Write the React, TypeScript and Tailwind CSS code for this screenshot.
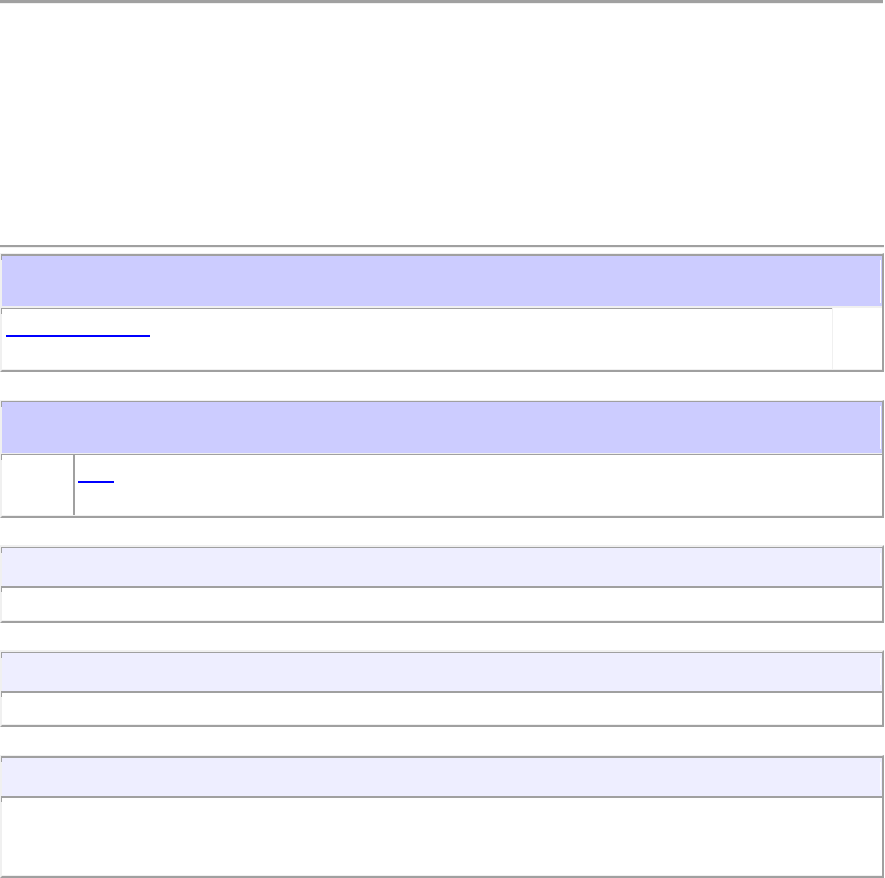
import React from "react";

function Tick({ cls }: { cls: string }) {
  return <span className={cls} />;
}

export default function App() {
  return (
    <div className="w-[885px] h-[878px] overflow-hidden bg-white font-['Liberation_Sans',sans-serif]">
      <div className="flex w-[884px] flex-col">
        {/* top rule */}
        <div className="h-[3px] w-[883px] bg-[#a0a0a0]" />
        <div className="h-px w-[883px] bg-[#f0f0f0]" />

        {/* second rule */}
        <div className="mt-[241px] h-[2px] bg-[#a0a0a0]" />
        <div className="h-px bg-[#f0f0f0]" />

        {/* table 1 */}
        <div className="mt-[5px] flex flex-col border-t border-l-2 border-r-2 border-b-2 border-t-[#f0f0f0] border-l-[#f0f0f0] border-r-[#a0a0a0] border-b-[#a0a0a0]">
          <div className="relative flex h-[54px] justify-end border-t-2 border-b-2 border-t-[#a0a0a0] border-b-[#f0f0f0] bg-[#ccccff] pt-[4px] pb-[3px] pr-px">
            <Tick cls="absolute left-[-1px] top-[-2px] h-[6px] w-px bg-[#a0a0a0]" />
            <div className="w-px bg-white" />
          </div>
          <div className="flex h-[62px]">
            <div className="relative flex-1 border-t border-b border-t-[#a0a0a0] border-b-[#f0f0f0] bg-white pl-[4px] pt-[26px]">
              <Tick cls="absolute left-[-1px] top-[-1px] h-[6px] w-px bg-[#a0a0a0]" />
              <a href="#" className="block h-0 w-[144px] border-b-2 border-[#0000ff]"></a>
            </div>
            <div className="w-[50px] border-l border-b border-l-[#f0f0f0] border-b-[#f0f0f0] bg-white" />
          </div>
        </div>

        {/* table 2 */}
        <div className="mt-[28px] flex flex-col border-t border-l-2 border-r-2 border-b-2 border-t-[#f0f0f0] border-l-[#f0f0f0] border-r-[#a0a0a0] border-b-[#a0a0a0]">
          <div className="relative flex h-[53px] justify-end border-t border-b border-t-[#a0a0a0] border-b-[#f0f0f0] bg-[#ccccff] pt-[4px] pb-[4px] pr-px">
            <Tick cls="absolute left-[-1px] top-[-1px] h-[6px] w-px bg-[#a0a0a0]" />
            <div className="w-px bg-white" />
          </div>
          <div className="flex h-[62px] border-t border-b border-t-[#a0a0a0] border-b-[#f0f0f0]">
            <div className="relative w-[71px] bg-white">
              <Tick cls="absolute left-[-1px] top-[-1px] h-[6px] w-px bg-[#a0a0a0]" />
            </div>
            <div className="flex-1 border-l-2 border-l-[#a0a0a0] bg-white pl-[3px] pt-[26px]">
              <a href="#" className="block h-0 w-[36px] border-b-2 border-[#0000ff]"></a>
            </div>
          </div>
        </div>

        {/* table 3 */}
        <div className="mt-[27px] flex flex-col border-t-2 border-l-2 border-r-2 border-b-2 border-t-[#f0f0f0] border-l-[#f0f0f0] border-r-[#a0a0a0] border-b-[#a0a0a0]">
          <div className="relative flex h-[39px] justify-end border-t border-t-[#a0a0a0] bg-[#eeeeff] pt-[5px] pb-[6px] pr-px">
            <Tick cls="absolute left-[-1px] top-[-1px] h-[6px] w-px bg-[#a0a0a0]" />
            <div className="w-px bg-white" />
          </div>
          <div className="relative h-[35px] border-t-2 border-b border-t-[#a0a0a0] border-b-[#f0f0f0] bg-white">
            <Tick cls="absolute left-[-1px] top-[-2px] h-[6px] w-px bg-[#a0a0a0]" />
          </div>
        </div>

        {/* table 4 */}
        <div className="mt-[27px] flex flex-col border-t-2 border-l-2 border-r-2 border-b-2 border-t-[#f0f0f0] border-l-[#f0f0f0] border-r-[#a0a0a0] border-b-[#a0a0a0]">
          <div className="relative flex h-[39px] justify-end border-t border-t-[#a0a0a0] bg-[#eeeeff] pt-[5px] pb-[6px] pr-px">
            <Tick cls="absolute left-[-1px] top-[-1px] h-[6px] w-px bg-[#a0a0a0]" />
            <div className="w-px bg-white" />
          </div>
          <div className="relative h-[34px] border-t-2 border-b border-t-[#a0a0a0] border-b-[#f0f0f0] bg-white">
            <Tick cls="absolute left-[-1px] top-[-2px] h-[6px] w-px bg-[#a0a0a0]" />
          </div>
        </div>

        {/* table 5 */}
        <div className="mt-[28px] flex flex-col border-t border-l-2 border-r-2 border-b-2 border-t-[#f0f0f0] border-l-[#f0f0f0] border-r-[#a0a0a0] border-b-[#a0a0a0]">
          <div className="relative flex h-[40px] justify-end border-t-2 border-t-[#a0a0a0] bg-[#eeeeff] pt-[4px] pb-[6px] pr-px">
            <Tick cls="absolute left-[-1px] top-[-2px] h-[6px] w-px bg-[#a0a0a0]" />
            <div className="w-px bg-white" />
          </div>
          <div className="relative h-[80px] border-t-2 border-b border-t-[#a0a0a0] border-b-[#f0f0f0] bg-white">
            <Tick cls="absolute left-[-1px] top-[-2px] h-[6px] w-px bg-[#a0a0a0]" />
          </div>
        </div>
      </div>
    </div>
  );
}
